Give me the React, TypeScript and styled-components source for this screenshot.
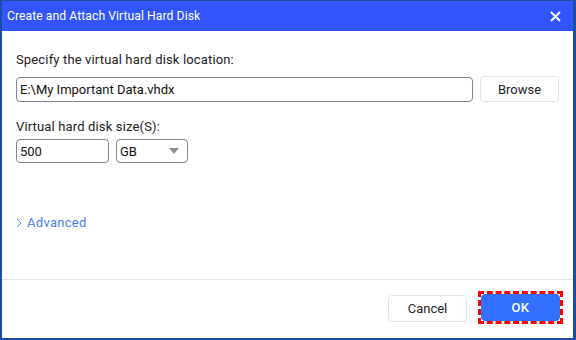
import React from "react";
import styled, { createGlobalStyle } from "styled-components";

const Global = createGlobalStyle`
  html, body { margin: 0; padding: 0; background: #ffffff; }
  body { font-family: Roboto, "Noto Sans", sans-serif; }
  * { box-sizing: border-box; }
`;

const Window = styled.div`
  width: 576px;
  height: 340px;
  display: flex;
  flex-direction: column;
  background: #ffffff;
  border-style: solid;
  border-color: #1d4ea6;
  border-width: 1px 3px 2px 2px;
`;

const TitleBar = styled.div`
  height: 30px;
  flex: none;
  background: #3355ff;
  display: flex;
  align-items: center;
  justify-content: space-between;
  padding: 0 12px 0 5px;
  color: #ffffff;
  font-size: 12.2px;
  letter-spacing: 0.05px;
`;

const CloseIcon = styled.svg`
  width: 11px;
  height: 11px;
  display: block;
`;

const Content = styled.div`
  flex: 1;
  display: flex;
  flex-direction: column;
  padding: 21px 0 0 14px;
`;

const Label = styled.div<{ $top?: number }>`
  font-size: 13px;
  line-height: 16px;
  color: #222222;
  margin-top: ${(p) => p.$top ?? 0}px;
  letter-spacing: 0.15px;
`;

const Row = styled.div<{ $top: number; $gap: number }>`
  display: flex;
  align-items: center;
  gap: ${(p) => p.$gap}px;
  margin-top: ${(p) => p.$top}px;
`;

const Field = styled.div<{ $width: number; $height: number }>`
  width: ${(p) => p.$width}px;
  height: ${(p) => p.$height}px;
  border: 1px solid #7b8696;
  border-radius: 4px;
  display: flex;
  align-items: center;
  padding: 0 8px 0 3px;
  font-size: 13px;
  color: #111111;
  justify-content: space-between;
`;

const Caret = styled.span`
  width: 0;
  height: 0;
  border-left: 5px solid transparent;
  border-right: 5px solid transparent;
  border-top: 6px solid #8a8f98;
`;

const Button = styled.button`
  width: 79px;
  height: 26px;
  border: 1px solid #dfe3ea;
  border-radius: 4px;
  background: #ffffff;
  font-family: Roboto, "Noto Sans", sans-serif;
  font-size: 13px;
  color: #222222;
  padding: 0;
`;

const Advanced = styled.div`
  margin-top: 52px;
  display: flex;
  align-items: center;
  gap: 5px;
  font-size: 13px;
  line-height: 16px;
  color: #4b7bf5;
  letter-spacing: 0.3px;
`;

const Footer = styled.div`
  height: 59px;
  flex: none;
  border-top: 1px solid #e4e6ee;
  display: flex;
  justify-content: flex-end;
  align-items: flex-start;
  gap: 11px;
  padding: 11px 10px 0 0;
`;

const CancelButton = styled(Button)`
  height: 27px;
  margin-top: 4px;
`;

const FocusFrame = styled.div`
  border: 3px dashed #ff0000;
  display: flex;
`;

const PrimaryButton = styled(Button)`
  height: 27px;
  background: #3370ff;
  border-color: #3370ff;
  color: #ffffff;
  font-weight: 500;
  letter-spacing: 0.5px;
`;

export default function App() {
  return (
    <>
      <Global />
      <Window>
        <TitleBar>
          <span>Create and Attach Virtual Hard Disk</span>
          <CloseIcon viewBox="0 0 11 11">
            <path d="M1 1 L10 10 M10 1 L1 10" stroke="#ffffff" strokeWidth="1.8" />
          </CloseIcon>
        </TitleBar>
        <Content>
          <Label>Specify the virtual hard disk location:</Label>
          <Row $top={8} $gap={7}>
            <Field $width={457} $height={25}>E:\My Important Data.vhdx</Field>
            <Button>Browse</Button>
          </Row>
          <Label $top={17}>Virtual hard disk size(S):</Label>
          <Row $top={4} $gap={7}>
            <Field $width={93} $height={24}>500</Field>
            <Field $width={72} $height={24}>
              <span>GB</span>
              <Caret />
            </Field>
          </Row>
          <Advanced>
            <svg width="6" height="10" viewBox="0 0 6 10">
              <path d="M1 1 L5 5 L1 9" stroke="#6b93f5" strokeWidth="1" fill="none" />
            </svg>
            <span>Advanced</span>
          </Advanced>
        </Content>
        <Footer>
          <CancelButton>Cancel</CancelButton>
          <FocusFrame>
            <PrimaryButton>OK</PrimaryButton>
          </FocusFrame>
        </Footer>
      </Window>
    </>
  );
}
